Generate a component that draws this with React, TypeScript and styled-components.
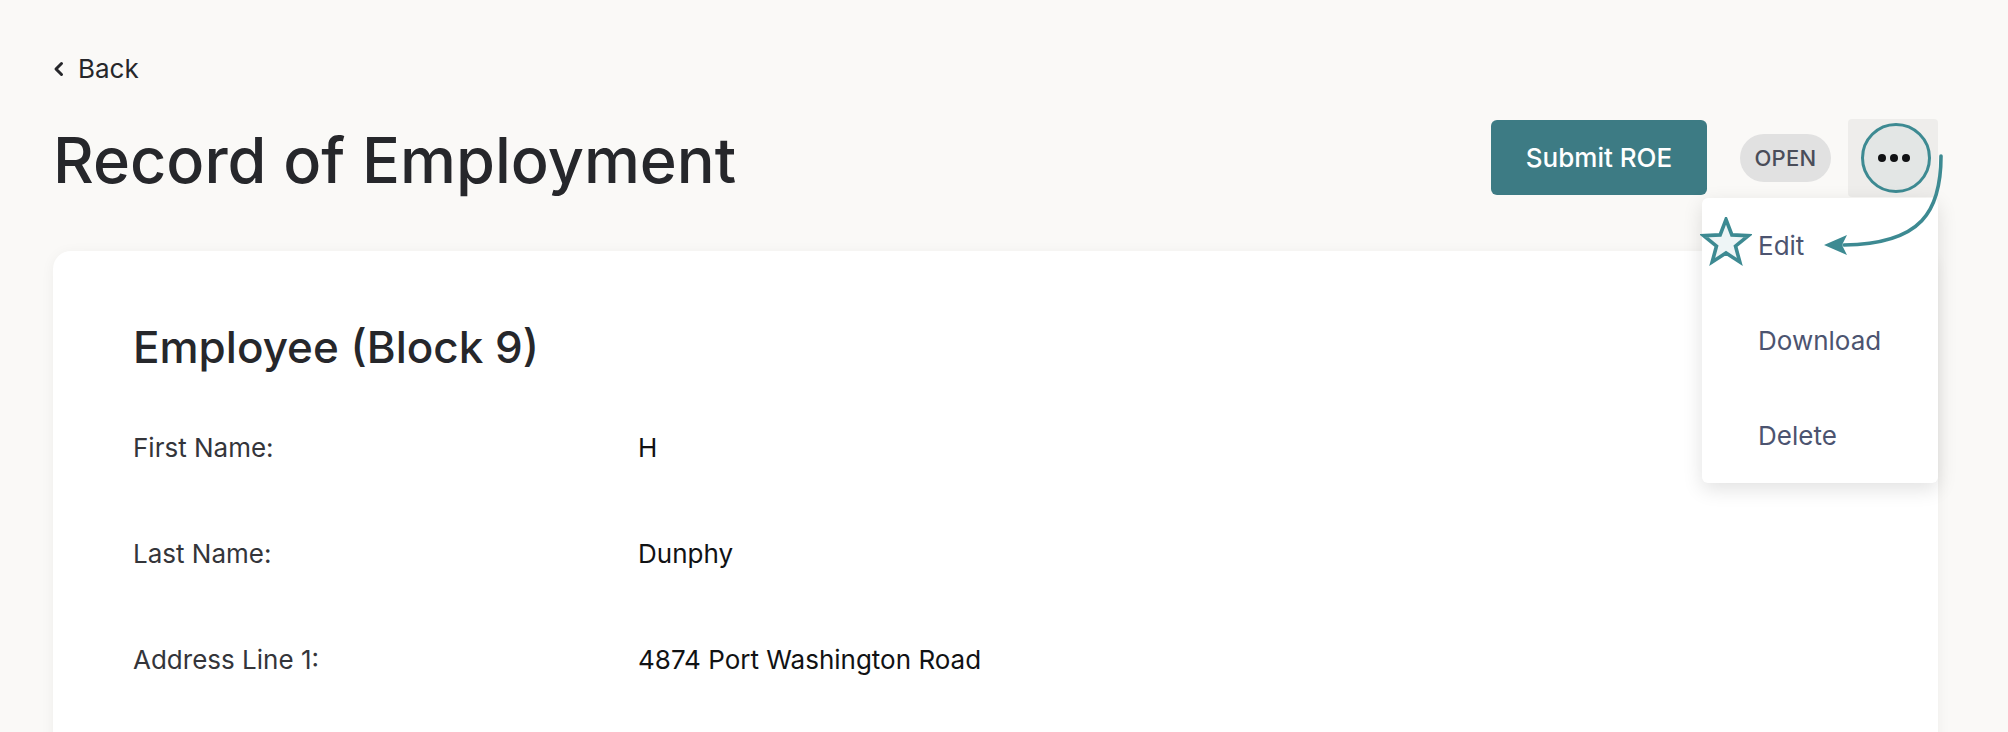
import styled, { createGlobalStyle } from "styled-components";

const GlobalStyle = createGlobalStyle`
  html, body {
    margin: 0;
    padding: 0;
    background: #faf9f7;
    font-family: Inter, "Noto Sans", sans-serif;
    color: #26272b;
  }
  * {
    box-sizing: border-box;
  }
`;

const TEAL = "#3d8a92";

const rows = [
  { label: "First Name:", value: "H" },
  { label: "Last Name:", value: "Dunphy" },
  { label: "Address Line 1:", value: "4874 Port Washington Road" },
];

const menuItems = ["Edit", "Download", "Delete"];

export default function App() {
  return (
    <>
      <GlobalStyle />
      <Page>
        <BackLink href="#">
          <svg width="12" height="16" viewBox="0 0 12 16" fill="none">
            <path
              d="M8.5 2.5 L3 8 L8.5 13.5"
              stroke="#26272b"
              strokeWidth="3"
              strokeLinecap="round"
              strokeLinejoin="round"
            />
          </svg>
          Back
        </BackLink>

        <Header>
          <Title>Record of Employment</Title>
          <Actions>
            <PrimaryButton>Submit ROE</PrimaryButton>
            <StatusBadge>OPEN</StatusBadge>
            <MoreWrap>
              <MoreButton>
                <Highlight>
                  <Dots>
                    <i />
                    <i />
                    <i />
                  </Dots>
                </Highlight>
              </MoreButton>
              <ArrowNote width="130" height="120" viewBox="0 0 130 120" fill="none">
                <path
                  d="M123 7 C123 62, 104 95, 26 96"
                  stroke={TEAL}
                  strokeWidth="3.6"
                  strokeLinecap="round"
                />
                <path d="M6 96 L29 86 L24 96 L29 106 Z" fill={TEAL} />
              </ArrowNote>
              <Menu>
                <StarNote width="52" height="50" viewBox="0 0 52 50">
                  <polygon
                    points="26,2.5 31.88,17.91 48.35,18.74 35.51,29.09 39.82,45.01 26,36 12.18,45.01 16.49,29.09 3.65,18.74 20.12,17.91"
                    fill="#eef5f6"
                    stroke={TEAL}
                    strokeWidth="3.6"
                    strokeLinejoin="miter"
                  />
                </StarNote>
                {menuItems.map((item) => (
                  <MenuItem key={item}>{item}</MenuItem>
                ))}
              </Menu>
            </MoreWrap>
          </Actions>
        </Header>

        <Card>
          <SectionTitle>Employee (Block 9)</SectionTitle>
          {rows.map((r) => (
            <Row key={r.label}>
              <Label>{r.label}</Label>
              <Value>{r.value}</Value>
            </Row>
          ))}
        </Card>
      </Page>
    </>
  );
}

const Page = styled.div`
  padding: 54px 70px 0 53px;
  height: 732px;
  overflow: hidden;
`;

const BackLink = styled.a`
  display: inline-flex;
  align-items: center;
  gap: 13px;
  font-size: 26px;
  line-height: 30px;
  color: #26272b;
  text-decoration: none;
`;

const Header = styled.div`
  margin-top: 34px;
  display: flex;
  align-items: center;
  justify-content: space-between;
`;

const Title = styled.h1`
  margin: 0;
  padding-top: 5px;
  font-size: 63px;
  line-height: 74px;
  font-weight: 500;
  color: #26272b;
`;

const Actions = styled.div`
  display: flex;
  align-items: center;
  gap: 17px;
`;

const PrimaryButton = styled.button`
  width: 216px;
  height: 75px;
  margin-right: 16px;
  border: none;
  border-radius: 6px;
  background: #3d7b84;
  color: #ffffff;
  font-family: inherit;
  font-size: 26px;
  font-weight: 500;
  cursor: pointer;
`;

const StatusBadge = styled.span`
  display: inline-flex;
  align-items: center;
  justify-content: center;
  width: 91px;
  height: 48px;
  border-radius: 24px;
  background: #e1e1e1;
  color: #4a4d59;
  font-size: 22px;
  font-weight: 500;
  letter-spacing: 0.3px;
`;

const MoreWrap = styled.div`
  position: relative;
`;

const MoreButton = styled.button`
  width: 90px;
  height: 78px;
  border: none;
  border-radius: 4px;
  background: #eeedeb;
  display: flex;
  align-items: center;
  justify-content: center;
  padding: 0 0 0 6px;
  cursor: pointer;
`;

const Highlight = styled.span`
  width: 70px;
  height: 70px;
  border-radius: 50%;
  border: 3.6px solid ${TEAL};
  background: #e3e6e5;
  display: flex;
  align-items: center;
  justify-content: center;
`;

const Dots = styled.span`
  display: flex;
  gap: 4px;
  margin-left: -4px;

  i {
    width: 8px;
    height: 8px;
    border-radius: 50%;
    background: #111214;
  }
`;

const ArrowNote = styled.svg`
  position: absolute;
  left: -30px;
  top: 30px;
  z-index: 3;
  overflow: visible;
`;

const Menu = styled.div`
  position: absolute;
  top: calc(100% + 1px);
  right: 0;
  width: 236px;
  background: #ffffff;
  border-radius: 6px;
  box-shadow: 0 6px 20px rgba(0, 0, 0, 0.12);
  z-index: 2;
`;

const StarNote = styled.svg`
  position: absolute;
  left: -2px;
  top: 19px;
`;

const MenuItem = styled.div`
  height: 95px;
  padding-left: 56px;
  display: flex;
  align-items: center;
  font-size: 26px;
  color: #4c5470;
`;

const Card = styled.section`
  margin-top: 54px;
  background: #ffffff;
  border-radius: 18px;
  box-shadow: 0 2px 14px rgba(0, 0, 0, 0.05);
  padding: 71px 80px 80px;
  min-height: 600px;
`;

const SectionTitle = styled.h2`
  margin: 0 0 23px;
  font-size: 44px;
  line-height: 50px;
  font-weight: 500;
  color: #26272b;
`;

const Row = styled.div`
  display: grid;
  grid-template-columns: 505px 1fr;
  padding: 40px 0;
  font-size: 26px;
  line-height: 26px;
`;

const Label = styled.span`
  color: #34353a;
`;

const Value = styled.span`
  color: #111214;
`;
